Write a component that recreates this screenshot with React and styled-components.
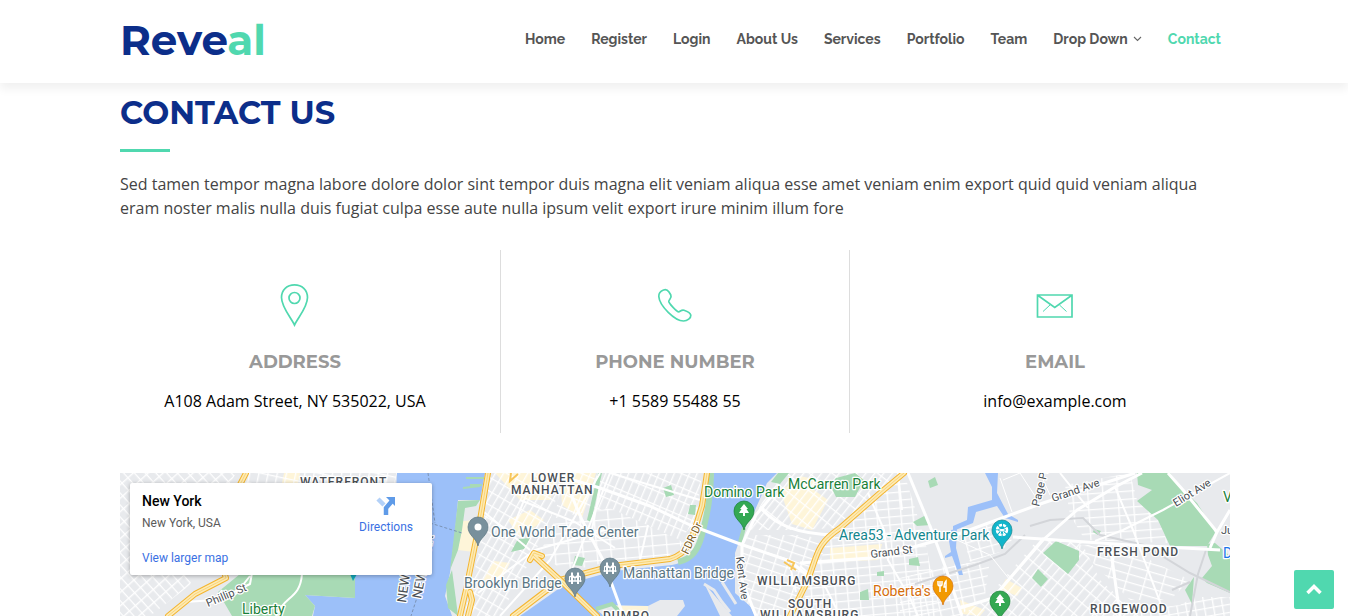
import React from "react";
import styled, { createGlobalStyle, css } from "styled-components";

const GlobalStyle = createGlobalStyle`
  *, *::before, *::after { box-sizing: border-box; }
  body {
    margin: 0;
    background: #fff;
    color: #444;
    font-family: "Open Sans", sans-serif;
    font-size: 16px;
    line-height: 24px;
  }
  a { text-decoration: none; }
`;

const Page = styled.div`
  display: flex;
  flex-direction: column;
  min-height: 100vh;
`;

const Container = styled.div`
  width: 100%;
  max-width: 1112px;
  margin: 0 auto;
  padding-left: 2px;
`;

const Header = styled.header`
  position: sticky;
  top: 0;
  z-index: 2;
  padding: 18px 0 21px;
  background: #fff;
  box-shadow: 0 6px 9px 0 rgba(0, 0, 0, 0.06);
`;

const Bar = styled(Container)`
  display: flex;
  align-items: center;
  justify-content: space-between;
`;

const Logo = styled.a`
  color: #0c2e8a;
  font: 700 42px/44px Montserrat, Inter, sans-serif;
  span { color: #50d8af; }
`;

const NavList = styled.ul`
  display: flex;
  gap: 26px;
  margin: 0;
  padding: 0 9px 2px 0;
  list-style: none;
`;

const NavLink = styled.a`
  display: flex;
  align-items: center;
  gap: 5px;
  color: ${(p) => (p.$active ? "#50d8af" : "#555")};
  font: 700 14px/24px Raleway, Lato, sans-serif;
  white-space: nowrap;
`;

const Section = styled.main`
  display: flex;
  flex: 1;
  flex-direction: column;
  padding-top: 10px;
`;

const Content = styled(Container)`
  display: flex;
  flex: 1;
  flex-direction: column;
`;

const Title = styled.h2`
  margin: 0 0 20px;
  color: #0c2e8a;
  font: 700 32px/40px Montserrat, Inter, sans-serif;
  text-transform: uppercase;
  &::after {
    content: "";
    display: block;
    width: 50px;
    height: 3px;
    margin-top: 16px;
    background: #50d8af;
  }
`;

const Intro = styled.p`
  margin: 0 0 30px;
`;

const InfoRow = styled.div`
  display: grid;
  grid-template-columns: repeat(3, 1fr);
  gap: 30px;
  margin-bottom: 40px;
`;

const InfoItem = styled.div`
  display: flex;
  flex-direction: column;
  align-items: center;
  padding: 30px 0 20px;
  text-align: center;
  ${(p) =>
    p.$divided &&
    css`
      border-left: 1px solid #ddd;
      border-right: 1px solid #ddd;
    `}
`;

const InfoIcon = styled.svg`
  width: 48px;
  height: 50px;
  margin-bottom: 20px;
  fill: none;
  stroke: #50d8af;
  stroke-width: 1.7;
`;

const InfoTitle = styled.h3`
  margin: 0 0 15px;
  color: #999;
  font: 700 18px/24px Montserrat, Inter, sans-serif;
  text-transform: uppercase;
`;

const InfoText = styled.address`
  color: #000;
  font-style: normal;
  a { color: inherit; }
`;

const MapFrame = styled.div`
  position: relative;
  display: flex;
  flex: 1;
  min-height: 143px;
  overflow: hidden;
  background: #e8eaed;
  font-family: Roboto, sans-serif;
`;

const MapDrawing = styled.svg`
  position: absolute;
  inset: 0;
  width: 100%;
  height: 100%;
`;

const PlaceCard = styled.div`
  position: absolute;
  top: 10px;
  left: 10px;
  display: flex;
  justify-content: space-between;
  width: 302px;
  padding: 9px 19px 9px 12px;
  border-radius: 2px;
  background: #fff;
  box-shadow: 0 1px 4px rgba(0, 0, 0, 0.3);
  font-size: 12px;
  line-height: 16px;
`;

const PlaceName = styled.div`
  color: #000;
  font-size: 14px;
  font-weight: 500;
  line-height: 18px;
`;

const PlaceAddress = styled.div`
  margin: 5px 0 19px;
  color: #5b5b5b;
`;

const CardLink = styled.a`
  color: #3a70e3;
`;

const Directions = styled(CardLink)`
  display: flex;
  flex-direction: column;
  align-items: center;
  gap: 4px;
  padding-top: 3px;
`;

const BackToTop = styled.button`
  position: fixed;
  right: 14px;
  bottom: 7px;
  z-index: 3;
  display: flex;
  align-items: center;
  justify-content: center;
  width: 40px;
  height: 39px;
  padding: 0;
  border: 0;
  border-radius: 2px;
  background: #50d8af;
`;

const NAV = ["Home", "Register", "Login", "About Us", "Services", "Portfolio", "Team", "Drop Down", "Contact"];

const WATER = "#9cc0f9";
const PARK = "#a8dab5";

/* Street grids: each polygon is filled with a rotated lattice of white lines. */
const GRIDS = [
  { id: "jersey", w: 10, h: 8, r: 48, points: "120,473 236,473 205,530 190,585 150,616 120,616" },
  { id: "jerseyEast", w: 9, h: 12, r: 12, points: "248,473 397,473 390,500 240,500" },
  { id: "tribeca", w: 7, h: 12, r: 30, points: "490,473 562,473 552,515 535,552 500,616 464,616 478,555" },
  { id: "eastside", w: 7, h: 13, r: 23, points: "562,473 702,473 696,520 680,540 610,508 555,518" },
  { id: "chinatown", w: 14, h: 10, r: -5, points: "555,520 610,508 685,543 668,556 608,562 565,572 540,553" },
  { id: "northside", w: 7, h: 14, r: 38, points: "782,473 900,473 834,528 800,530 750,530 765,495" },
  { id: "southside", w: 13, h: 8, r: 18, points: "748,535 800,535 830,540 808,582 790,616 752,616 742,590 738,560" },
  { id: "eastWburg", w: 12, h: 8, r: -5, points: "835,530 878,497 905,476 925,540 940,616 798,616 815,570" },
  { id: "creekside", w: 12, h: 9, r: -15, points: "962,535 992,523 1012,540 1000,552 970,562" },
  { id: "bushwickWest", w: 12, h: 8, r: -12, points: "900,578 945,566 990,560 985,595 960,616 900,616" },
  { id: "bushwick", w: 8, h: 13, r: 40, points: "985,600 1040,537 1082,543 1100,580 1140,616 960,616" },
  { id: "maspeth", w: 15, h: 8, r: -4, points: "1065,485 1130,473 1137,500 1158,520 1168,543 1085,540 1070,515" },
  { id: "freshpond", w: 18, h: 8, r: 16, points: "1075,545 1120,545 1190,580 1170,600 1130,600" },
  { id: "ridgewood", w: 9, h: 8, r: -10, points: "1140,610 1180,605 1195,597 1230,597 1230,616 1140,616" },
];

const PARKS = [
  "218,592 240,574 355,574 355,598 305,595 315,606 312,616 232,616",
  "458,501 480,500 476,506 465,508 462,530 458,550 450,570",
  "446,585 452,570 456,600 458,616 448,608",
  "511,552 518,539 530,538 524,549",
  "587,520 598,473 602,473 591,522",
  "663,488 671,485 674,495 666,497",
  "690,505 696,505 695,515 688,514",
  "573,565 575,556 585,558 582,566",
  "771,482 778,473 789,473 780,484",
  "830,485 836,478 855,473 864,480 855,497 836,497",
  "928,481 935,477 938,485 930,488",
  "913,522 926,515 931,525 917,526",
  "909,559 918,557 920,566 909,565",
  "860,592 868,589 869,600 860,600",
  "877,572 884,571 884,576 877,576",
  "1056,541 1079,551 1079,560 1068,574 1043,553",
  "1038,569 1048,579 1041,587 1032,578",
  "1094,529 1101,531 1098,535 1093,532",
  "1137,473 1170,473 1183,490 1197,503 1213,528 1215,533 1207,546 1170,546 1158,520 1137,501 1152,490 1138,485",
  "1202,578 1212,566 1208,555 1207,544 1215,543 1230,556 1230,593 1207,583",
  "1185,590 1194,577 1192,604",
];

const DISTRICTS = [
  "284,473 300,473 298,483 282,483",
  "495,473 560,473 550,500 520,500",
  "560,473 596,473 582,518 562,505",
  "508,520 530,510 544,520 520,538",
  "494,561 510,563 496,590 480,585",
  "463,521 478,520 474,552 458,550",
  "522,473 545,473 533,495 517,491",
  "780,490 800,480 828,500 812,530 792,524",
  "800,476 818,480 810,490 795,485",
  "830,548 882,544 878,560 830,562",
  "1006,579 1022,588 1017,596 1000,589",
  "960,600 985,610 980,616 962,614",
  "612,606 648,606 648,616 622,616",
];

const ROADS = [
  { w: 3, d: "M560 476L600 488L650 506L690 525L740 544L790 561L808 576" },
  { w: 3, d: "M562 473L582 520L603 560L622 612" },
  { w: 2, d: "M478 593L535 550L605 530M500 616L550 560L600 473" },
  { w: 2, d: "M520 500L575 522L615 548M535 473L510 535M610 473L570 575M484 512L530 550" },
  { w: 2, d: "M640 560L648 525M600 488L590 540M610 473L700 500" },
  { w: 3, d: "M760 507C775 525 797 534 835 535M775 492L756 515L742 545L742 580L756 616" },
  { w: 3, d: "M800 563L870 558L910 548L953 536L1043 503L1083 490L1135 473" },
  { w: 2, d: "M800 566L826 588L840 616M790 566L796 592M868 493L884 530L888 560L910 598L918 616M902 510L898 473" },
  { w: 3, d: "M908 473L930 526L945 566L962 616" },
  { w: 3, d: "M960 608L993 598L1043 540L1077 510L1115 487L1142 473M1013 537L1130 545L1220 550" },
  { w: 2, d: "M1060 473L1088 508M1095 541L1123 530L1163 510L1230 473M1115 487L1133 530L1163 610" },
  { w: 3, d: "M1168 473L1183 490L1217 532L1230 510M1110 544L1120 616M1217 532L1210 548" },
  { w: 1, d: "M1000 478L1012 512M1003 480L1020 473L1035 496M1040 473L1050 495M957 540L990 555L1010 580" },
  { w: 2, d: "M170 616L185 602L215 600L222 590M235 595L250 576M302 574C300 600 284 595 276 616M252 573L250 584L212 603" },
];

const HIGHWAYS = [
  "M246 473L232 500L215 545L226 578L195 594L168 616",
  "M488 473L480 520L466 590L460 616M470 592L472 600L468 616",
  "M513 616L560 580L612 566L670 559C690 553 692 538 702 506L707 473",
  "M533 555L560 580L597 616M530 560L534 553L542 556",
  "M904 473L880 493L840 528C815 545 818 555 807 582L790 616",
];

const LABELS = [
  { x: 300, y: 486, t: "WATERFRONT", area: true },
  { x: 531, y: 482, t: "LOWER", area: true },
  { x: 511, y: 494, t: "MANHATTAN", area: true },
  { x: 757, y: 585, t: "WILLIAMSBURG", area: true },
  { x: 788, y: 608, t: "SOUTH", area: true },
  { x: 760, y: 619, t: "WILLIAMSBURG", area: true },
  { x: 603, y: 620, t: "DUMBO", area: true },
  { x: 1097, y: 556, t: "FRESH POND", area: true },
  { x: 1090, y: 613, t: "RIDGEWOOD", area: true },
  { x: 491, y: 537, t: "One World Trade Center", c: "#5a7684" },
  { x: 464, y: 588, t: "Brooklyn Bridge", c: "#5a7684" },
  { x: 623, y: 578, t: "Manhattan Bridge", c: "#5a7684" },
  { x: 704, y: 497, t: "Domino Park", c: "#188038" },
  { x: 788, y: 489, t: "McCarren Park", c: "#188038" },
  { x: 242, y: 614, t: "Liberty", c: "#188038" },
  { x: 839, y: 540, t: "Area53 - Adventure Park", c: "#12858d" },
  { x: 873, y: 596, t: "Roberta's", c: "#d56e0c" },
  { x: 1223, y: 502, t: "V", c: "#188038" },
  { x: 1223, y: 558, t: "D", c: "#1a73e8" },
  { x: 1221, y: 534, t: "Ju", s: 11 },
  { x: 871, y: 558, t: "Grand St", s: 11, r: -7 },
  { x: 208, y: 607, t: "Phillip St", s: 11, r: -23 },
  { x: 736, y: 557, t: "Kent Ave", s: 11, r: 83 },
  { x: 1039, y: 507, t: "Page Pl", s: 11, r: -76 },
  { x: 1053, y: 502, t: "Grand Ave", s: 11, r: -19 },
  { x: 1176, y: 507, t: "Eliot Ave", s: 11, r: -32 },
  { x: 688, y: 555, t: "FDR Dr", s: 11, r: -65, c: "#7a5a20" },
  { x: 406, y: 603, t: "NEW JERSEY", s: 13, r: -82 },
  { x: 421, y: 599, t: "NEW YORK", s: 13, r: -79 },
];

function MapLabel({ x, y, t, c = "#4a4f55", s = 14, r = 0, area }) {
  return (
    <text
      x={x}
      y={y}
      transform={r ? `rotate(${r} ${x} ${y})` : undefined}
      fill={c}
      fontSize={area ? 12 : s}
      fontWeight={area ? 500 : 400}
      letterSpacing={area ? 1 : 0}
      stroke="#fff"
      strokeWidth="2.5"
      strokeLinejoin="round"
      paintOrder="stroke"
    >
      {t}
    </text>
  );
}

function Pin({ x, y, color, edge, children }) {
  return (
    <g transform={`translate(${x} ${y})`}>
      <path d="M0 19C-1.500 11-10 8.500-10 0A10 10 0 0 1 10 0C10 8.500 1.500 11 0 19Z" fill={color} stroke={edge} strokeWidth=".7" />
      {children}
    </g>
  );
}

const Tree = () => <path d="M0-7L4-2H2.5L5 2H1V5H-1V2H-5L-2.5-2H-4Z" fill="#fff" />;

const Bridge = () => (
  <g fill="none" stroke="#fff">
    <path d="M-3-5.500V6M3-5.500V6" strokeWidth="2" />
    <path d="M-6.500 3H6.500M-6-1Q-4-1-3-3Q0 2 3-3Q4-1 6-1" strokeWidth="1.5" />
    <path d="M-5.500-1V4M0 0V3M5.500-1V4" strokeWidth="1" />
  </g>
);

function CityMap() {
  return (
    <MapDrawing viewBox="120 473 1110 143" preserveAspectRatio="xMidYMin slice" role="img" aria-label="Map of New York">
      <defs>
        {GRIDS.map((g) => (
          <pattern key={g.id} id={g.id} width={g.w} height={g.h} patternUnits="userSpaceOnUse" patternTransform={`rotate(${g.r})`}>
            <path d={`M0 .7H${g.w}M.7 0V${g.h}`} stroke="#fff" strokeWidth="1.3" />
          </pattern>
        ))}
      </defs>
      <rect x="120" y="473" width="1110" height="143" fill="#e8eaed" />
      {DISTRICTS.map((p) => <polygon key={p} points={p} fill="#fef5d9" />)}
      {GRIDS.map((g) => <polygon key={g.id} points={g.points} fill={`url(#${g.id})`} />)}

      <g fill={WATER}>
        <path d="M397 473H485L480 500H458L455 533L450 573L445 596L452 616H313L315 606L305 595L355 598V574L392 560Z" />
        <path d="M714 473H777L767 483L755 510L743 530L735 553V593L750 606L755 616H732L704 583L720 616H677L685 606L683 600H660L648 606L610 605L597 610L604 616H520L564 585L614 571L672 565C697 560 702 542 707 520Z" />
        <path d="M985 473H998L997 493L1008 514L1018 520V522L1005 518L997 506L976 512L973 523L953 531V526L967 520L968 507L992 500V487Z" />
        <path d="M951 530L957 529L956 548L963 575H959L952 556L945 558V556L951 552L949 541Z" />
      </g>
      {PARKS.map((p) => <polygon key={p} points={p} fill={PARK} />)}
      <path d="M711 473C711 500 706 518 702 535C698 550 692 559 678 562" fill="none" stroke={PARK} strokeWidth="6" />
      <path d="M466 478H484M470 485H482M463 488L480 486" stroke={PARK} strokeWidth="2" />
      <path d="M744 528L740 542M596 609L612 604L620 612" stroke={PARK} strokeWidth="4" fill="none" />
      <path d="M704 584L714 590L722 602L730 612M722 582L736 604" stroke="#e8eaed" strokeWidth="3" fill="none" />
      <path d="M430 523L462 533M428 473L435 523M424 576L411 616" fill="none" stroke="#7b93b5" strokeWidth="1" strokeDasharray="3 2" />
      <path d="M1030 526L1050 520L1083 518L1100 535L1144 545L1190 573L1230 592M1206 550L1198 574L1190 616M1190 582L1172 590M1025 535L1005 554L975 565L915 584" fill="none" stroke="#d3d5d9" strokeWidth="2" />

      {ROADS.map((r) => <path key={r.d} d={r.d} fill="none" stroke="#fff" strokeWidth={r.w} strokeLinejoin="round" />)}
      {HIGHWAYS.map((d) => (
        <g key={d} fill="none" strokeLinejoin="round" strokeLinecap="round">
          <path d={d} stroke="#f4b52f" strokeWidth="6" />
          <path d={d} stroke="#fdeab5" strokeWidth="4" />
          <path d={d} stroke="#f8cf68" strokeWidth=".8" />
        </g>
      ))}
      <path d="M784 562L796 570M787 560L794 563L791 570M511 473L510 481L518 474" fill="none" stroke="#f7c65b" strokeWidth="2" />

      {LABELS.map((l) => <MapLabel key={`${l.t}${l.y}`} {...l} />)}

      <Pin x={478} y={527} color="#78909c" edge="#5c7683"><circle r="3.5" fill="#fff" /></Pin>
      <Pin x={575} y={578} color="#78909c" edge="#5c7683"><Bridge /></Pin>
      <Pin x={610} y={568} color="#78909c" edge="#5c7683"><Bridge /></Pin>
      <Pin x={744} y={511} color="#34a853" edge="#188038"><Tree /></Pin>
      <Pin x={1000} y={601} color="#34a853" edge="#188038"><Tree /></Pin>
      <Pin x={943} y={586} color="#f29900" edge="#d56e0c">
        <path d="M-5-5V-2Q-5 0-3 0Q-1 0-1-2V-5M-3-5V6M3 6V-5Q1-3 1 1H3" fill="none" stroke="#fff" strokeWidth="1.5" />
      </Pin>
      <Pin x={1002} y={530} color="#12b5cb" edge="#12858d">
        <circle r="5" fill="none" stroke="#fff" strokeWidth="2.5" strokeDasharray="3 1" />
        <path d="M-3 6L0-1L3 6M-5-2L5 2M5-2L-5 2" fill="none" stroke="#fff" strokeWidth="1" />
      </Pin>
      <path d="M350 574H357L353 581Z" fill="#12a5b8" />
    </MapDrawing>
  );
}

export default function App() {
  return (
    <Page>
      <GlobalStyle />
      <Header>
        <Bar>
          <Logo href="#top">Reve<span>al</span></Logo>
          <nav aria-label="Main">
            <NavList>
              {NAV.map((item) => (
                <li key={item}>
                  <NavLink href="#contact" $active={item === "Contact"}>
                    {item}
                    {item === "Drop Down" && (
                      <svg width="9" height="6" viewBox="0 0 9 6" fill="none" stroke="#666" strokeWidth="1.1" aria-hidden="true">
                        <path d="M1 1L4.5 4.5L8 1" />
                      </svg>
                    )}
                  </NavLink>
                </li>
              ))}
            </NavList>
          </nav>
        </Bar>
      </Header>

      <Section id="contact">
        <Content>
          <Title>Contact Us</Title>
          <Intro>
            Sed tamen tempor magna labore dolore dolor sint tempor duis magna elit veniam aliqua esse amet veniam enim
            export quid quid veniam aliqua eram noster malis nulla duis fugiat culpa esse aute nulla ipsum velit export
            irure minim illum fore
          </Intro>

          <InfoRow>
            <InfoItem>
              <InfoIcon viewBox="0 0 48 50" aria-hidden="true">
                <path d="M23.500 45C19.500 37 10.500 27 10.500 17.500C10.500 10 16 4.800 23.500 4.800S36.500 10 36.500 17.500C36.500 27 27.500 37 23.500 45Z" />
                <circle cx="23.500" cy="18" r="5.500" />
              </InfoIcon>
              <InfoTitle>Address</InfoTitle>
              <InfoText>A108 Adam Street, NY 535022, USA</InfoText>
            </InfoItem>
            <InfoItem $divided>
              <InfoIcon viewBox="0 0 48 50" aria-hidden="true">
                <path d="M12.500 10C15 8.800 16.500 9.800 18 12L19.800 15C21.300 18 17.500 19.500 17.800 21.500C18.200 23.500 24.500 30.500 27 31.700C29 32.500 30 29.300 33 30.300C35.500 31.200 39.500 33.500 39.800 35.200C40 38 36.500 41 32.500 41C24 41 8.500 26 7.800 16.500C7.600 13.500 10 11 12.500 10Z" />
              </InfoIcon>
              <InfoTitle>Phone Number</InfoTitle>
              <InfoText><a href="tel:+155895548855">+1 5589 55488 55</a></InfoText>
            </InfoItem>
            <InfoItem>
              <InfoIcon viewBox="0 0 48 50" aria-hidden="true">
                <path d="M6.500 15H41V37H6.500Z M7 15.500L23.750 27.500L40.500 15.500" />
                <path d="M19 25L12 31.500M28.500 25L35.500 31.500" strokeWidth="1" />
              </InfoIcon>
              <InfoTitle>Email</InfoTitle>
              <InfoText><a href="mailto:info@example.com">info@example.com</a></InfoText>
            </InfoItem>
          </InfoRow>

          <MapFrame>
            <CityMap />
            <PlaceCard>
              <div>
                <PlaceName>New York</PlaceName>
                <PlaceAddress>New York, USA</PlaceAddress>
                <CardLink href="#map">View larger map</CardLink>
              </div>
              <Directions href="#directions">
                <svg width="20" height="20" viewBox="0 0 20 20" fill="none" aria-hidden="true">
                  <path d="M2 4L8 10" stroke="#b3d1f8" strokeWidth="4.500" />
                  <path d="M10 20V13L16 6" stroke="#5f9be8" strokeWidth="4.500" />
                  <path d="M10 2H19V11Z" fill="#5f9be8" />
                </svg>
                Directions
              </Directions>
            </PlaceCard>
          </MapFrame>
        </Content>
      </Section>

      <BackToTop type="button" aria-label="Back to top">
        <svg width="16" height="11" viewBox="0 0 16 11" fill="none" stroke="#fff" strokeWidth="3.500" aria-hidden="true">
          <path d="M1.500 9L8 2.500L14.500 9" />
        </svg>
      </BackToTop>
    </Page>
  );
}
